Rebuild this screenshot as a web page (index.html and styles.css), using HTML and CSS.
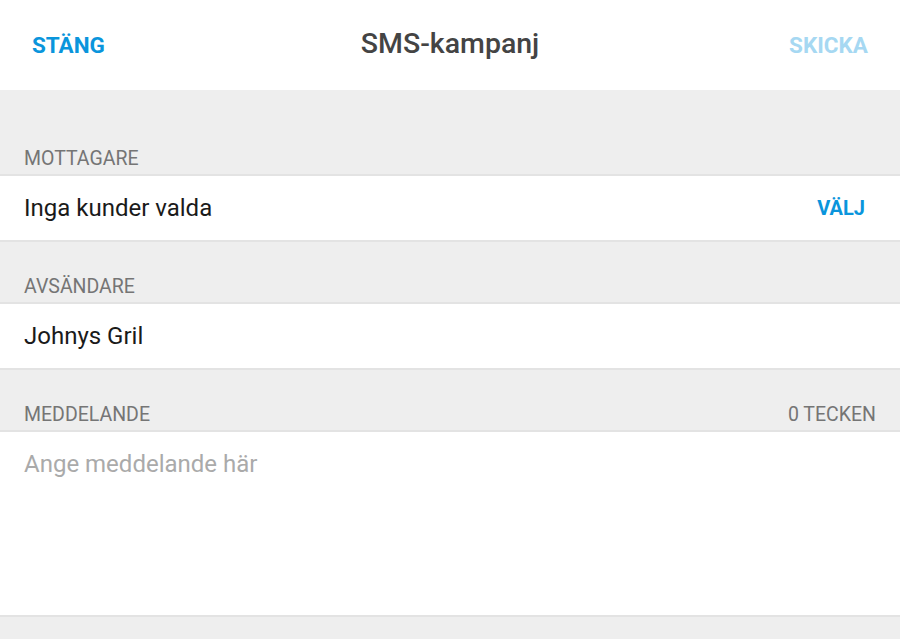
FILE: index.html
```html
<!DOCTYPE html>
<html lang="sv">
<head>
<meta charset="utf-8">
<title>SMS-kampanj</title>
<link rel="stylesheet" href="styles.css">
</head>
<body>
<div class="app">
  <header class="topbar">
    <div class="bar-left"><button class="btn btn-close">STÄNG</button></div>
    <h1 class="title">SMS-kampanj</h1>
    <div class="bar-right"><button class="btn btn-send">SKICKA</button></div>
  </header>
  <main class="content">
    <div class="section-label first"><span>MOTTAGARE</span></div>
    <div class="row">
      <span class="row-text">Inga kunder valda</span>
      <button class="btn btn-pick">VÄLJ</button>
    </div>
    <div class="section-label"><span>AVSÄNDARE</span></div>
    <div class="row">
      <span class="row-text">Johnys Gril</span>
    </div>
    <div class="section-label"><span>MEDDELANDE</span><span>0 TECKEN</span></div>
    <div class="message">
      <span class="placeholder">Ange meddelande här</span>
    </div>
  </main>
</div>
</body>
</html>
```
FILE: styles.css
```css
html, body {
  margin: 0;
  padding: 0;
  height: 100%;
}
body {
  font-family: Roboto, "Noto Sans", sans-serif;
  background: #eeeeee;
  overflow: hidden;
}
.app {
  display: flex;
  flex-direction: column;
  height: 100%;
}
.topbar {
  height: 90px;
  background: #ffffff;
  display: grid;
  grid-template-columns: 1fr auto 1fr;
  align-items: center;
  padding: 0 32px;
  box-sizing: border-box;
}
.bar-left { display: flex; justify-content: flex-start; }
.bar-right { display: flex; justify-content: flex-end; }
.btn {
  border: none;
  background: none;
  padding: 0;
  font-family: inherit;
  font-weight: 700;
  font-size: 22.5px;
  line-height: 1;
  cursor: pointer;
}
.btn-close { color: #0a95dc; }
.btn-send { color: #a6d8f2; }
.title {
  margin: 0;
  font-size: 28.5px;
  font-weight: 500;
  color: #444444;
  line-height: 1;
  padding-bottom: 2px;
}
.content {
  display: flex;
  flex-direction: column;
}
.section-label {
  height: 60px;
  display: flex;
  align-items: flex-end;
  justify-content: space-between;
  padding: 0 24px 6px 24px;
  box-sizing: border-box;
  font-size: 19.5px;
  line-height: 1;
  color: #757575;
}
.section-label.first { height: 84px; }
.row {
  height: 68px;
  background: #ffffff;
  border-top: 2px solid #e3e3e3;
  border-bottom: 2px solid #e3e3e3;
  box-sizing: border-box;
  display: flex;
  align-items: center;
  justify-content: space-between;
  padding: 0 35px 0 24px;
}
.row-text {
  font-size: 24px;
  color: #1a1a1a;
}
.btn-pick { color: #0a95dc; font-size: 20px; }
.message {
  height: 187px;
  background: #ffffff;
  border-top: 2px solid #e3e3e3;
  border-bottom: 2px solid #e3e3e3;
  box-sizing: border-box;
  padding: 18px 24px;
}
.placeholder {
  font-size: 24px;
  color: #aaaaaa;
}
```
